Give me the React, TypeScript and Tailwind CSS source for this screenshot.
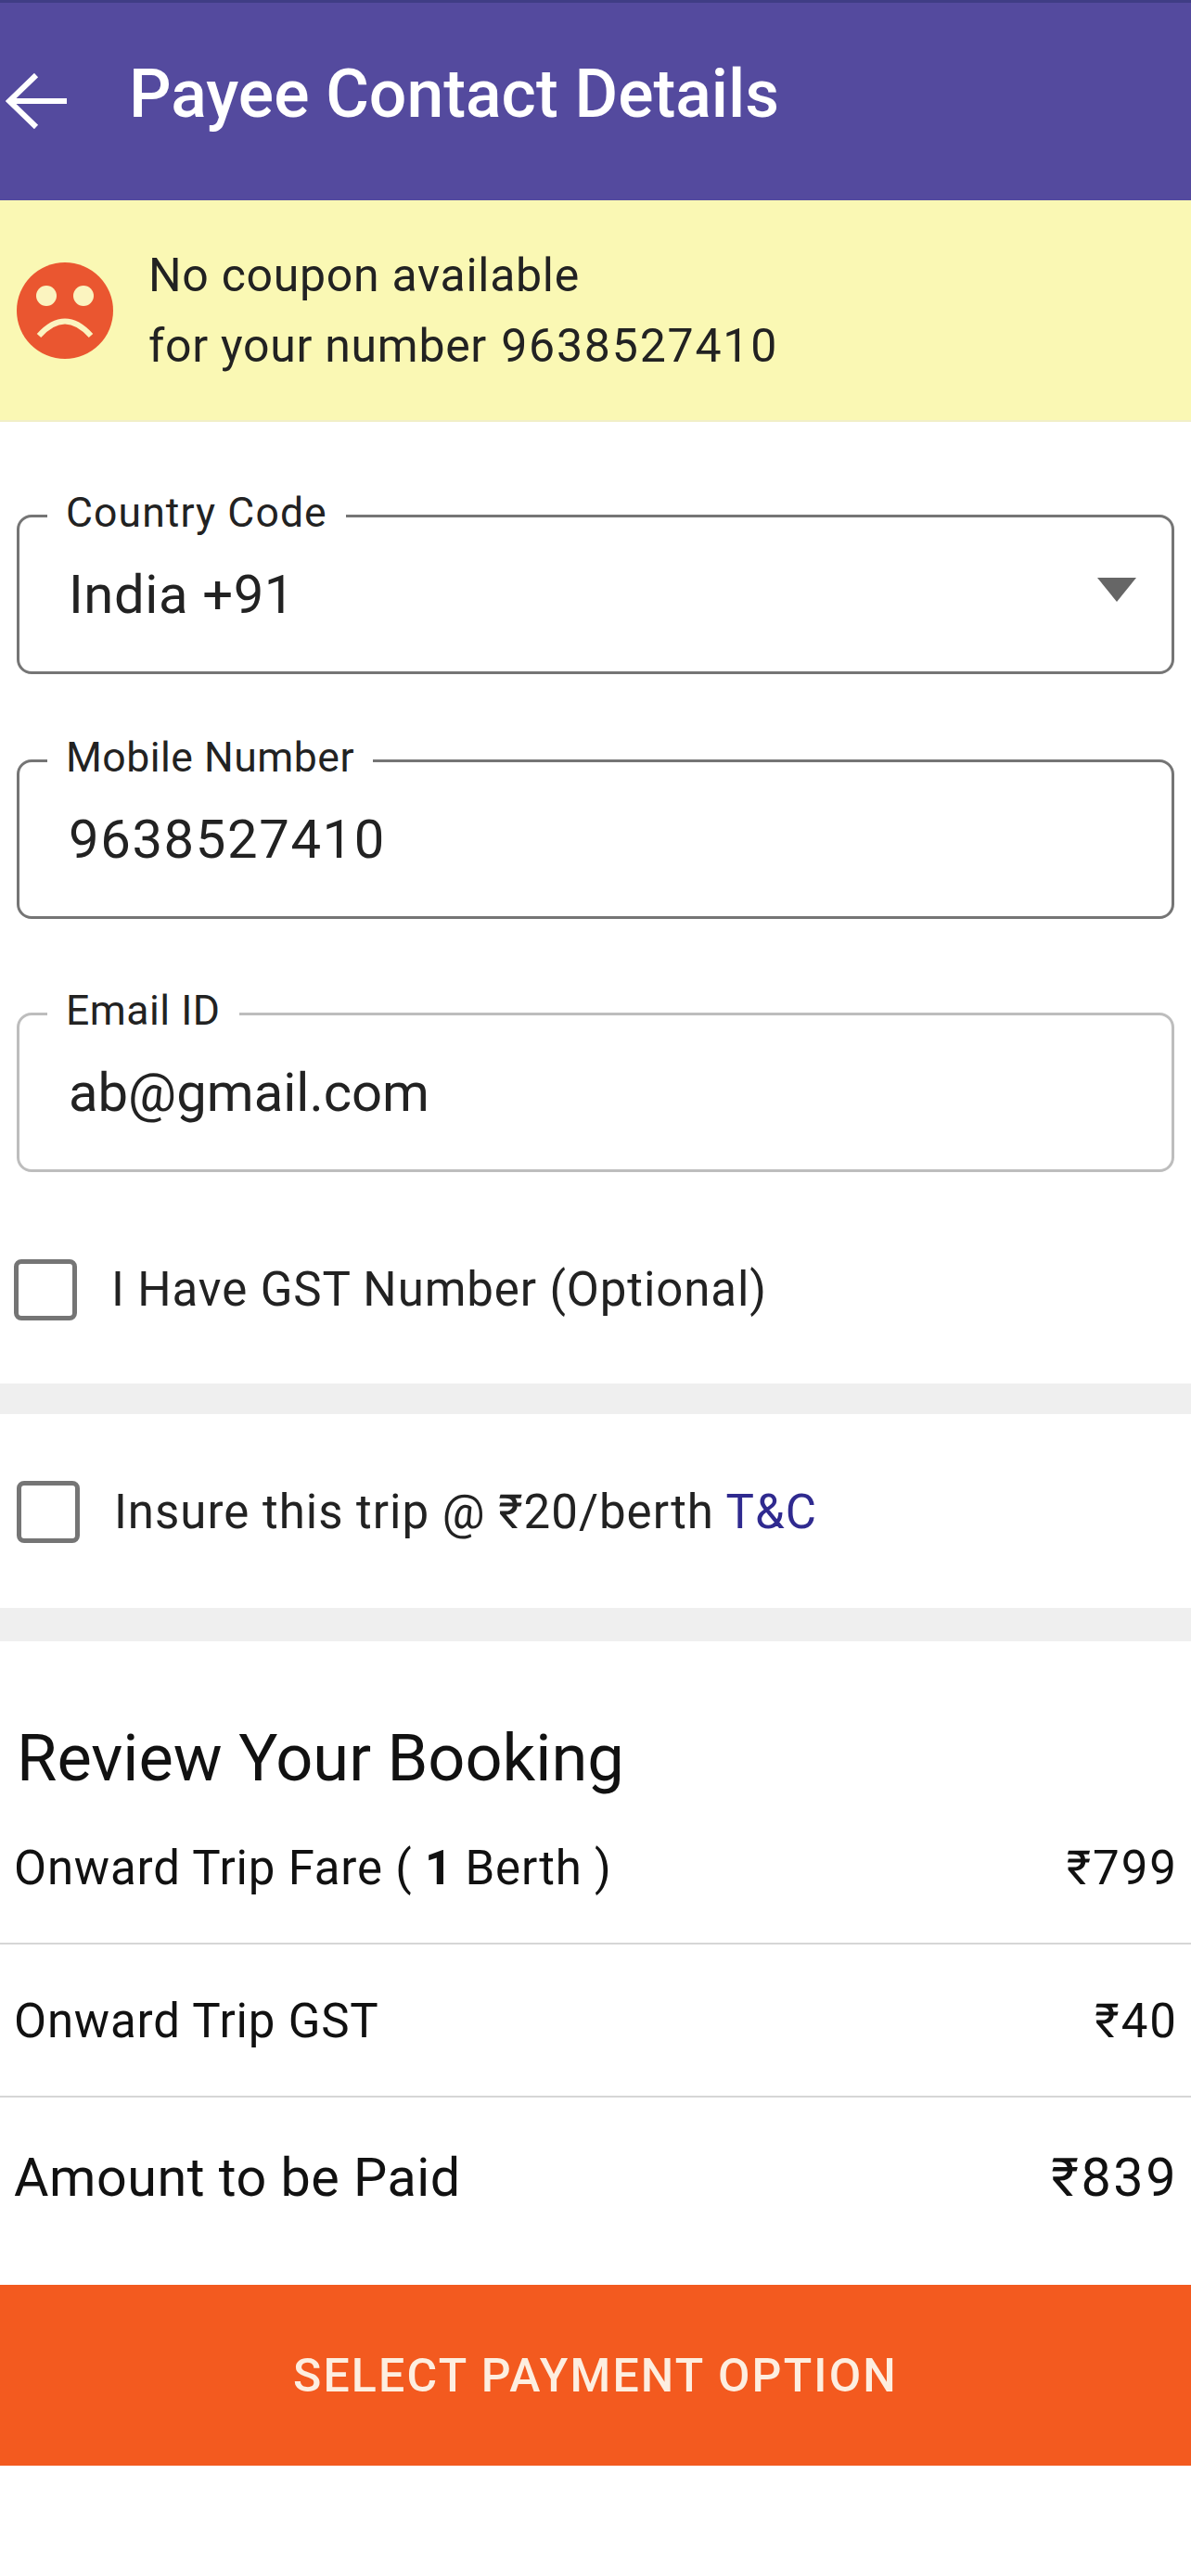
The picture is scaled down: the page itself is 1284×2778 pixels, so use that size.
const font = "font-['Roboto',sans-serif]";

function OutlinedField({
  label,
  value,
  light,
  caret,
  className,
  labelClass,
  valueClass,
}: {
  label: string;
  value: string;
  light?: boolean;
  caret?: boolean;
  className?: string;
  labelClass?: string;
  valueClass?: string;
}) {
  return (
    <div
      className={`relative mx-[18px] flex h-[172px] items-center justify-between rounded-[16px] border-[3px] pl-[53px] pr-[38px] ${
        light ? "border-[#bdbdbd]" : "border-[#757575]"
      } ${className ?? ""}`}
    >
      <span
        className={`absolute left-[30px] top-[-28px] bg-white px-[20px] text-[44.5px] leading-[46px] text-[#222] ${
          labelClass ?? "tracking-[0.5px]"
        }`}
      >
        {label}
      </span>
      <span className={`text-[58px] leading-[64px] text-[#222] ${valueClass ?? "tracking-[0.6px]"}`}>
        {value}
      </span>
      {caret && (
        <svg width="42" height="26" viewBox="0 0 42 26" className="mt-[-11px]">
          <path d="M0 0H42L21 26Z" fill="#666" />
        </svg>
      )}
    </div>
  );
}

function CheckRow({
  left,
  boxHeight,
  textClass,
  children,
}: {
  left: string;
  boxHeight: string;
  textClass: string;
  children: React.ReactNode;
}) {
  return (
    <div className={`flex items-center gap-[37px] ${left}`}>
      <div className={`w-[68px] shrink-0 rounded-[8px] border-[5px] border-[#757575] ${boxHeight}`} />
      <div className={`text-[51px] leading-[56px] text-[#222] ${textClass}`}>{children}</div>
    </div>
  );
}

function FareRow({ label, amount, total }: { label: React.ReactNode; amount: string; total?: boolean }) {
  return (
    <div
      className={`flex items-center justify-between pl-[15px] pr-[14px] text-[#111] ${
        total
          ? "h-[174px] text-[57.5px] tracking-[0.5px]"
          : "h-[165px] border-b-2 border-[#d6d6d6] pt-[3px] text-[51px] tracking-[0.8px]"
      }`}
    >
      <span>{label}</span>
      <span className={total ? "tracking-[2.5px]" : "tracking-[2px]"}>{amount}</span>
    </div>
  );
}

export default function App() {
  return (
    <div className={`${font} h-[2778px] w-[1284px] overflow-hidden bg-white`}>
      {/* Header */}
      <div className="flex h-[216px] items-center border-t-[3px] border-[#3f3d85] bg-[#544a9e] pl-[6px]">
        <svg width="66" height="60" viewBox="0 0 66 60" fill="none" stroke="#fff" strokeWidth="6" className="mt-[-2px]">
          <path d="M66 30H4M33 2L4 30L33 58" />
        </svg>
        <h1 className="ml-[67px] mt-[-16px] text-[71.5px] font-medium text-white">Payee Contact Details</h1>
      </div>

      {/* Coupon banner */}
      <div className="flex h-[239px] items-center border-b-2 border-[#f1efc8] bg-[#faf8b4] pl-[18px]">
        <svg width="104" height="104" viewBox="0 0 104 104" className="shrink-0">
          <circle cx="52" cy="52" r="52" fill="#ea5630" />
          <circle cx="32" cy="36" r="11" fill="#fbf4c0" />
          <circle cx="72" cy="36" r="11" fill="#fbf4c0" />
          <path d="M24 79Q52 48 80 79" fill="none" stroke="#fbf4c0" strokeWidth="6" />
        </svg>
        <div className="ml-[38px] text-[50px] leading-[76px] tracking-[0.7px] text-[#222]">
          <div>No coupon available</div>
          <div>
            for your number <span className="ml-[2px] tracking-[1.8px]">9638527410</span>
          </div>
        </div>
      </div>

      {/* Contact form */}
      <OutlinedField
        label="Country Code"
        value="India +91"
        caret
        labelClass="tracking-[1.1px]"
        className="mt-[100px]"
      />
      <OutlinedField label="Mobile Number" value="9638527410" valueClass="tracking-[1.6px]" className="mt-[92px]" />
      <OutlinedField label="Email ID" value="ab@gmail.com" light valueClass="tracking-[0px]" className="mt-[101px]" />

      <div className="mt-[94px]">
        <CheckRow left="pl-[15px]" boxHeight="h-[66px]" textClass="tracking-[0.9px]">
          I Have GST Number (Optional)
        </CheckRow>
      </div>
      <div className="mt-[68px] h-[33px] bg-[#efefef]" />

      <div className="mt-[72px]">
        <CheckRow left="pl-[18px]" boxHeight="h-[67px]" textClass="tracking-[1px]">
          Insure this trip @ ₹20/berth <span className="text-[#2f2a8f]">T&amp;C</span>
        </CheckRow>
      </div>
      <div className="mt-[70px] h-[36px] bg-[#efefef]" />

      {/* Booking review */}
      <h2 className="mt-[90px] pl-[18px] text-[70.4px] leading-[72px] text-[#111]">Review Your Booking</h2>
      <div>
        <FareRow
          label={
            <>
              Onward Trip Fare ( <span className="font-bold">1</span> Berth )
            </>
          }
          amount="₹799"
        />
        <FareRow label="Onward Trip GST" amount="₹40" />
        <FareRow label="Amount to be Paid" amount="₹839" total />
      </div>

      <button className="mt-[28px] flex h-[195px] w-full items-center justify-center bg-[#f35a1f] pt-[2px] text-[50px] font-medium tracking-[2.2px] text-[#fdeee0]">
        SELECT PAYMENT OPTION
      </button>
    </div>
  );
}
